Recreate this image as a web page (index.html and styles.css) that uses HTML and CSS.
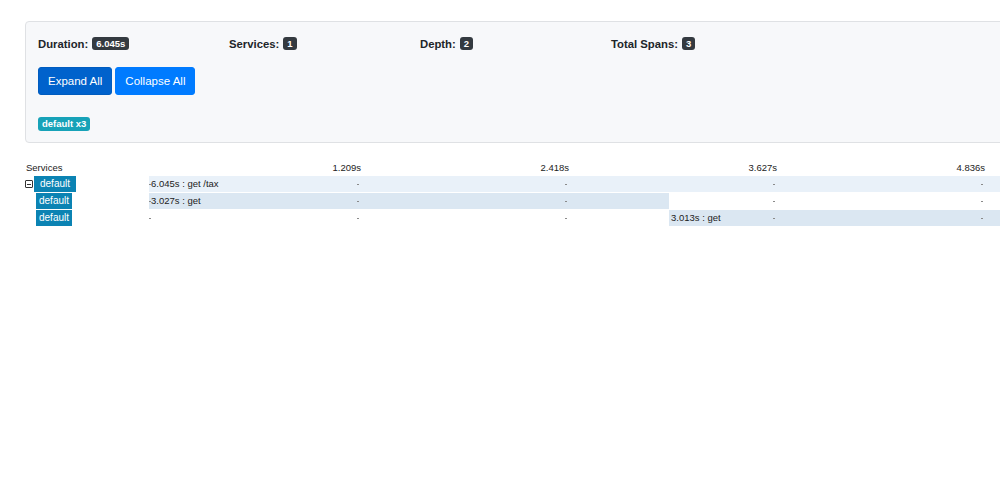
FILE: index.html
```html
<!DOCTYPE html>
<html lang="en">
<head>
<meta charset="utf-8">
<title>Trace</title>
<link rel="stylesheet" href="styles.css">
</head>
<body>
<div class="page">
  <div class="summary">
    <div class="stats">
      <div class="stat"><span class="stat-label">Duration:</span> <span class="badge badge-dark">6.045s</span></div>
      <div class="stat"><span class="stat-label">Services:</span> <span class="badge badge-dark">1</span></div>
      <div class="stat"><span class="stat-label">Depth:</span> <span class="badge badge-dark">2</span></div>
      <div class="stat"><span class="stat-label">Total Spans:</span> <span class="badge badge-dark">3</span></div>
    </div>
    <div class="actions">
      <button class="btn btn-active">Expand All</button>
      <button class="btn">Collapse All</button>
    </div>
    <div class="legend"><span class="badge badge-info">default x3</span></div>
  </div>

  <div class="timeline">
    <div class="tl-header">
      <div class="tl-services">Services</div>
      <div class="tl-tick">1.209s</div>
      <div class="tl-tick">2.418s</div>
      <div class="tl-tick">3.627s</div>
      <div class="tl-tick">4.836s</div>
    </div>

    <div class="tl-row">
      <div class="tl-service">
        <span class="toggle"></span>
        <span class="svc svc-root">default</span>
      </div>
      <div class="lane">
        <div class="bar bar-root" style="left:0px;width:1040px">6.045s : get /tax</div>
        <span class="dot d0"></span><span class="dot d1"></span><span class="dot d2"></span><span class="dot d3"></span><span class="dot d4"></span>
      </div>
    </div>

    <div class="tl-row">
      <div class="tl-service child">
        <span class="svc">default</span>
      </div>
      <div class="lane">
        <div class="bar" style="left:0px;width:520px">3.027s : get</div>
        <span class="dot d0"></span><span class="dot d1"></span><span class="dot d2"></span><span class="dot d3"></span><span class="dot d4"></span>
      </div>
    </div>

    <div class="tl-row">
      <div class="tl-service child">
        <span class="svc">default</span>
      </div>
      <div class="lane">
        <div class="bar" style="left:520px;width:520px">3.013s : get</div>
        <span class="dot d0"></span><span class="dot d1"></span><span class="dot d2"></span><span class="dot d3"></span><span class="dot d4"></span>
      </div>
    </div>
  </div>
</div>
</body>
</html>
```

FILE: styles.css
```css
html, body {
  margin: 0;
  padding: 0;
  background: #ffffff;
}

body {
  font-family: "Liberation Sans", Arial, sans-serif;
  color: #212529;
}

.page {
  width: 1000px;
  height: 486px;
  overflow: hidden;
  padding: 21px 0 0 25px;
  box-sizing: border-box;
}

.summary {
  width: 1200px;
  box-sizing: border-box;
  background: #f7f8fa;
  border: 1px solid #dfe1e4;
  border-radius: 4px;
  padding: 12px 12px 11px 12px;
}

.stats {
  display: grid;
  grid-template-columns: repeat(4, 191px);
  height: 19px;
  align-items: center;
}

.stat {
  display: flex;
  align-items: center;
  gap: 4px;
  white-space: nowrap;
}

.stat-label {
  font-size: 11.3px;
  font-weight: bold;
  color: #212529;
}

.badge {
  display: inline-block;
  color: #ffffff;
  font-weight: bold;
  border-radius: 3px;
  line-height: 13px;
  white-space: nowrap;
}

.badge-dark {
  background: #343a40;
  font-size: 9.5px;
  padding: 0 4px;
  height: 13px;
}

.badge-info {
  background: #17a2b8;
  font-size: 9.5px;
  padding: 0 4px;
  height: 14px;
  line-height: 14px;
}

.actions {
  display: flex;
  gap: 3px;
  margin-top: 14px;
}

.btn {
  height: 28px;
  padding: 0 9px;
  border: 1px solid #007bff;
  background: #007bff;
  color: #ffffff;
  font-family: "Liberation Sans", Arial, sans-serif;
  font-size: 11.5px;
  border-radius: 3px;
  cursor: pointer;
}

.btn-active {
  background: #0062cc;
  border-color: #005cbf;
}

.legend {
  margin-top: 22px;
  height: 14px;
  display: flex;
}

.timeline {
  margin-top: 17px;
  font-size: 9.5px;
  color: #222;
}

.tl-header {
  display: flex;
  height: 16px;
  line-height: 16px;
  white-space: nowrap;
}

.tl-services {
  width: 128px;
  flex: none;
  padding-left: 1px;
  box-sizing: border-box;
}

.tl-tick {
  width: 208px;
  flex: none;
  text-align: right;
}

.tl-row {
  display: flex;
  height: 17px;
}

.tl-service {
  width: 124px;
  flex: none;
  display: flex;
  align-items: flex-start;
  box-sizing: border-box;
}

.tl-service.child {
  padding-left: 11px;
}

.toggle {
  position: relative;
  flex: none;
  width: 8px;
  height: 8px;
  border: 1px solid #333;
  box-sizing: border-box;
  margin-top: 4px;
  border-radius: 1px;
}

.toggle::after {
  content: "";
  position: absolute;
  left: 1px;
  right: 1px;
  top: 2.5px;
  height: 1px;
  background: #333;
}

.svc {
  display: inline-block;
  height: 16px;
  line-height: 16px;
  background: #0b83b3;
  color: #ffffff;
  font-size: 10px;
  padding: 0 3px;
}

.svc-root {
  margin-left: 1px;
  padding: 0 6px;
}

.lane {
  position: relative;
  width: 1040px;
  flex: none;
  height: 17px;
}

.bar {
  position: absolute;
  top: 0;
  height: 16px;
  line-height: 16px;
  background: #dbe7f2;
  padding-left: 2px;
  box-sizing: border-box;
  white-space: nowrap;
  color: #222;
}

.bar-root {
  background: #e9f1f9;
}

.dot {
  position: absolute;
  top: 8px;
  width: 2px;
  height: 1px;
  background: #8a8a8a;
}

.d0 { left: 0; }
.d1 { left: 208px; }
.d2 { left: 416px; }
.d3 { left: 624px; }
.d4 { left: 832px; }
```
